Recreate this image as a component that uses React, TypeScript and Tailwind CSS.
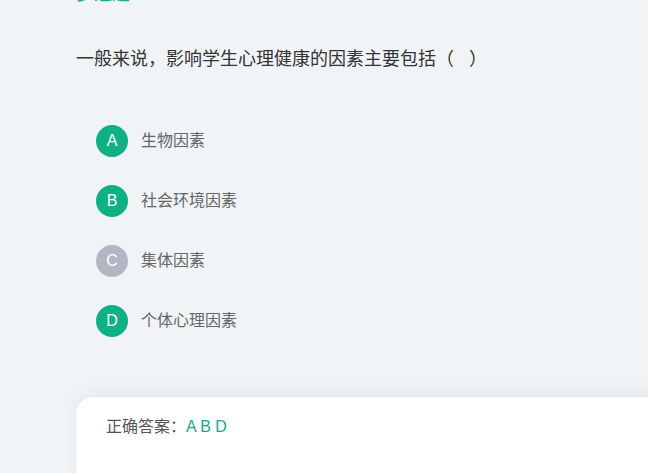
import React from 'react';

const options = [
    { key: 'A', text: '生物因素', selected: true },
    { key: 'B', text: '社会环境因素', selected: true },
    { key: 'C', text: '集体因素', selected: false },
    { key: 'D', text: '个体心理因素', selected: true },
];

const App: React.FC = () => {
    return (
        <div
            className="w-full h-[473px] overflow-hidden bg-[#f1f4f7]"
            style={{ fontFamily: '"Liberation Sans", "Noto Sans CJK SC", sans-serif' }}
        >
            <div className="pl-[76px]">
                <div className="mt-[-18px] h-[24px] text-[18px] leading-[24px] text-[#14b185]">多选题</div>

                <div className="mt-[41px] text-[18px] leading-[24px] text-[#333]">
                    一般来说，影响学生心理健康的因素主要包括（&nbsp;&nbsp;&nbsp;）
                </div>

                <div className="mt-[54px] pl-[20px] flex flex-col gap-[28px]">
                    {options.map((o) => (
                        <div key={o.key} className="flex items-center gap-[13px]">
                            <div
                                className={`w-[32px] h-[32px] rounded-full flex items-center justify-center text-white text-[16px] ${o.selected ? 'bg-[#0fb184]' : 'bg-[#b1b7c2]'}`}
                            >
                                {o.key}
                            </div>
                            <span className="text-[16px] text-[#666]">{o.text}</span>
                        </div>
                    ))}
                </div>

                <div className="mt-[60px] mr-[-40px] h-[120px] bg-white rounded-[18px] shadow-[0_-4px_18px_rgba(0,0,0,0.05)] pl-[30px] pt-[18px]">
                    <span className="text-[16px] text-[#555]">正确答案：</span>
                    <span className="text-[16px] text-[#1aaa88]">A B D</span>
                </div>
            </div>
        </div>
    );
};

export default App;
